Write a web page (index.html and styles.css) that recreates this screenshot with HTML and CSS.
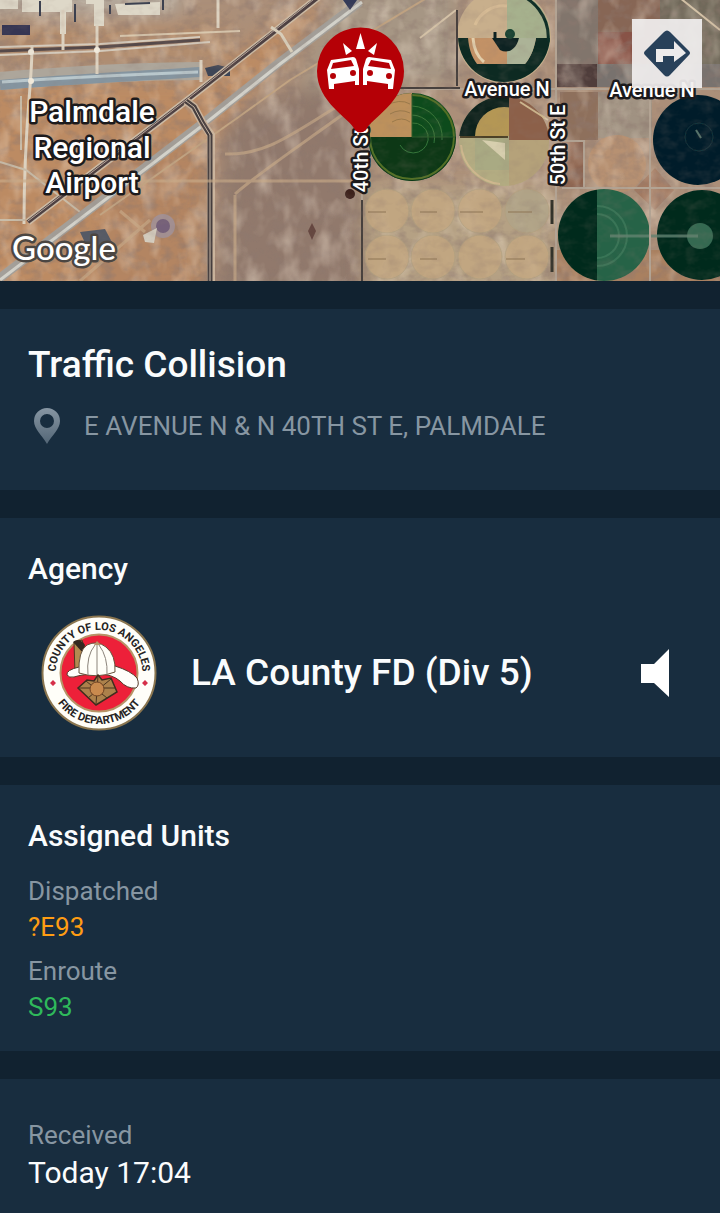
FILE: index.html
```html
<!DOCTYPE html>
<html lang="en">
<head>
<meta charset="utf-8">
<meta name="viewport" content="width=device-width, initial-scale=1">
<title>Traffic Collision</title>
<link rel="stylesheet" href="styles.css">
</head>
<body>
<main class="page">
  <section class="map" aria-label="Incident map">
    <svg class="map-canvas" viewBox="0 0 720 281" role="img" aria-label="Satellite map of Palmdale">
      <defs>
        <filter id="grain" x="0" y="0" width="100%" height="100%">
          <feTurbulence type="fractalNoise" baseFrequency="0.07 0.1" numOctaves="3" seed="8"/>
          <feColorMatrix values="0 0 0 0 0.27  0 0 0 0 0.19  0 0 0 0 0.16  2.2 0 0 0 -0.95"/>
        </filter>
        <filter id="light" x="0" y="0" width="100%" height="100%">
          <feTurbulence type="fractalNoise" baseFrequency="0.05 0.03" numOctaves="3" seed="21"/>
          <feColorMatrix values="0 0 0 0 0.9  0 0 0 0 0.78  0 0 0 0 0.64  0 2.2 0 0 -1"/>
        </filter>
        <filter id="soft" x="-10%" y="-10%" width="120%" height="120%"><feGaussianBlur stdDeviation="9"/></filter>
        <filter id="edge" x="-5%" y="-5%" width="110%" height="110%"><feGaussianBlur stdDeviation="0.6"/></filter>
        <clipPath id="fieldA"><circle cx="504" cy="36" r="46"/></clipPath>
        <clipPath id="fieldB"><circle cx="412" cy="137" r="44"/></clipPath>
        <clipPath id="fieldC"><circle cx="504" cy="141" r="45"/></clipPath>
        <clipPath id="fieldD"><circle cx="604" cy="235" r="46"/></clipPath>
      </defs>
      <rect width="720" height="281" fill="#ab8f79"/>
      <g filter="url(#soft)">
        <path d="M-20 80H200L280 20 330 0 210 140 200 300H-20Z" fill="#bc8b63"/>
        <path d="M0 24H230V60H0Z" fill="#b38c6c"/>
        <path d="M-20-20H180V14H-20Z" fill="#b4a99c"/>
        <path d="M225 120 320 80H362V300H215Z" fill="#91796c"/>
        <path d="M340-20H458V85H400L300 90Z" fill="#a69684"/>
        <path d="M120 150H205V290H90Z" fill="#b38562"/>
        <path d="M365 185H555V290H365Z" fill="#b5a184"/>
      </g>
      <g filter="url(#edge)">
        <path d="M555 0H598V64H555Z" fill="#81746c"/>
        <path d="M598 0H660V64H598Z" fill="#876655"/>
        <path d="M598 32H634V64H598Z" fill="#885347"/>
        <path d="M660 0H720V64H660Z" fill="#6f695a"/>
        <path d="M557 64H597V87H557Z" fill="#4f3d3a"/>
        <path d="M597 64H720V87H597Z" fill="#78726e"/>
        <path d="M560 92H598V140H560Z" fill="#8e705b"/>
        <path d="M598 92H652V138H598Z" fill="#a09282"/>
        <path d="M562 141H584V189H562Z" fill="#8c624d"/>
        <circle cx="617" cy="164" r="29" fill="#b79172"/>
        <path d="M634 190 655 168 674 190 655 210Z" fill="#a27a62"/>
        <path d="M557 250H720V281H557Z" fill="#a98061"/>
      </g>
      <rect width="720" height="281" filter="url(#grain)" opacity=".5"/>
      <rect width="720" height="281" filter="url(#light)" opacity=".45"/>
      <g filter="url(#edge)">
        <g fill="#ded8c8">
          <path d="M22 0H72V12H22ZM86 0H104V26H94V4H86ZM115 4 160 2V15H118ZM60 10H66V34H60Z"/>
          <path d="M0 0H18V9H0Z"/>
        </g>
        <path d="M40 1V16M75 4V22M110 5V14M125 4 150 3M163 0V10" stroke="#3a4050" stroke-width="2"/>
        <path d="M2 25H30V35H2Z" fill="#363453"/>
        <path d="M205 68 218 65 230 68V76H208Z" fill="#3d4556"/>
        <path d="M0 81C70 75 150 71 201 71" fill="none" stroke="#ada69b" stroke-width="18"/>
        <path d="M0 85C70 79 140 76 200 72" fill="none" stroke="#8595a0" stroke-width="10"/>
        <path d="M2 82C70 77 120 75 198 72" fill="none" stroke="#b9c8cd" stroke-width="3"/>
        <path d="M0 47 100 44 200 37M0 55 100 51 210 42" fill="none" stroke="#d5cbbc" stroke-width="2"/>
        <path d="M0 51 100 47 200 40" fill="none" stroke="#54494a" stroke-width="3"/>
        <path d="M120 36 240 31" stroke="#d9c8ae" stroke-width="2"/>
        <path d="M32 45C32 90 24 120 24 224M97 25V74M63 10V50M201 60V82M218 0V28" fill="none" stroke="#ddd2c0" stroke-width="3"/>
        <circle cx="31" cy="52" r="3" fill="#f1eadb"/><circle cx="31" cy="81" r="3" fill="#f1eadb"/><circle cx="97" cy="50" r="3" fill="#f1eadb"/>
        <path d="M21 96V150M0 162 26 170 80 212M0 220H25" fill="none" stroke="#c9bda9" stroke-width="2"/>
        <path d="M100 215 240 116 290 80 430-4" fill="none" stroke="#c2a482" stroke-width="2"/>
        <path d="M0 278 207 120 280 62 360 2" fill="none" stroke="#a39f99" stroke-width="9"/>
        <path d="M0 280 207 122 280 64 362 2" fill="none" stroke="#d3d2ca" stroke-width="3"/>
        <path d="M343 0 350 10 357 0" fill="#343a58"/>
        <path d="M28 222 190 98 320-4" fill="none" stroke="#cdbca6" stroke-width="7"/>
        <path d="M28 222 190 98 320-4" fill="none" stroke="#4e4142" stroke-width="4"/>
        <path d="M28 221 190 97 318-4" fill="none" stroke="#b8a79b" stroke-width="1"/>
        <path d="M271 27 281 34 292 52" fill="none" stroke="#d8cdb9" stroke-width="3"/>
        <path d="M186 101 194 107 202 122 211 135V281" fill="none" stroke="#cbb59d" stroke-width="8"/>
        <path d="M186 101 194 107 202 122 210 135V281" fill="none" stroke="#443c3d" stroke-width="5"/>
        <path d="M186 101 194 107 202 122 210 135V281" fill="none" stroke="#c9b9a8" stroke-width="1"/>
        <path d="M225 154C270 156 300 127 355 96M235 194C255 176 285 156 342 115M235 195V281M0 181H362M80 281 150 220M120 211 145 232" fill="none" stroke="#c7aa88" stroke-width="3" opacity=".65"/>
        <circle cx="163" cy="226" r="12" fill="#a39092"/><circle cx="163" cy="226" r="7" fill="#75617a"/>
        <path d="M143 235 157 228 154 243 145 242Z" fill="#d5cec0"/>
        <path d="M80 232 105 229 116 250 87 247Z" fill="#555a65"/>
        <circle cx="350" cy="194" r="5" fill="#3c211e"/><path d="M312 223 316 231 312 240 308 231Z" fill="#654740"/>
        <path d="M420 38 456 10M515 100 548 120M680-2 720 30" stroke="#d4c2a7" stroke-width="2"/>

        <circle cx="504" cy="36" r="47" fill="#c8af8c"/>
        <g clip-path="url(#fieldA)">
          <path d="M507-12H555V64H507Z" fill="#a6b18d"/>
          <path d="M458 38H552V84H458Z" fill="#082a24"/>
          <path d="M468 38H536C534 50 530 58 525 64H477C471 56 469 48 468 38Z" fill="#c39266"/>
          <path d="M507 38H536C534 50 530 58 525 64H507Z" fill="#acb397"/>
          <path d="M473 38Q474 54 484 62" fill="none" stroke="#e4d0ac" stroke-width="3"/>
          <path d="M475 25A31 31 0 0 1 507 6" fill="none" stroke="#d8bd96" stroke-width="3"/>
        </g>
        <path d="M510-8A46 46 0 0 1 548 42" fill="none" stroke="#112e25" stroke-width="3"/>
        <path d="M492 38H519C516 50 508 54 500 50Z" fill="#102223"/><circle cx="510" cy="34" r="5" fill="#164331"/><path d="M495 32V40" stroke="#102223" stroke-width="3"/>

        <g clip-path="url(#fieldB)">
          <path d="M368 90H460V184H368Z" fill="#104c1b"/>
          <path d="M370 137H460V184H370Z" fill="#083819"/>
          <path d="M370 92H412V137H370Z" fill="#bd915c"/>
          <path d="M390 114Q400 108 410 113M385 106Q400 98 410 104M392 122Q402 116 410 122" stroke="#9a794b" fill="none"/>
        </g>
        <path d="M412 95A42 42 0 1 1 370 137" fill="none" stroke="#526f25" stroke-width="2"/>
        <path d="M412 123A15 15 0 1 1 400 145M412 115A23 23 0 0 1 434 143M412 106A31 31 0 0 1 442 140" fill="none" stroke="#39763a" stroke-width="1"/>
        <path d="M412 94V137H455" fill="none" stroke="#2e5b29" stroke-width="1"/>

        <circle cx="504" cy="141" r="45" fill="#b3ac82"/>
        <g clip-path="url(#fieldC)">
          <path d="M458 90H510V136H458Z" fill="#0b211d"/>
          <circle cx="504" cy="136" r="29" fill="#b49755"/>
          <path d="M475 136H509V170H475Z" fill="#a9aa83"/>
          <path d="M509 90H550V140H509Z" fill="#8c614a"/>
          <path d="M509 140H552V190H509Z" fill="#b5a27a"/>
          <path d="M482 140 505 143V160Z" fill="#d7cfae"/>
        </g>
        <path d="M460 137H508" stroke="#4b4128" stroke-width="2"/>
        <path d="M461 145A43 43 0 0 0 500 184M520 102 545 118" fill="none" stroke="#ceb78e" stroke-width="2"/>

        <circle cx="698" cy="140" r="45" fill="#061d29"/><circle cx="699" cy="137" r="14" fill="none" stroke="#10343b"/><path d="M696 130 701 138" stroke="#55736b" stroke-width="2"/>
        <g clip-path="url(#fieldD)">
          <path d="M555 185H597V281H555Z" fill="#062c1c"/>
          <path d="M597 185H652V281H597Z" fill="#286347"/>
          <path d="M597 206A30 30 0 0 1 597 266M597 214A22 22 0 0 1 597 258" stroke="#397457" stroke-width="2" fill="none"/>
        </g>
        <circle cx="702" cy="235" r="45" fill="#04291f"/><circle cx="700" cy="236" r="13" fill="#366951"/>
        <path d="M610 236H652M652 236H698" stroke="#618471" stroke-width="3" opacity=".8"/>

        <g fill="#c4a781" stroke="#b2a07f" opacity=".75">
          <circle cx="387" cy="211" r="22"/><circle cx="433" cy="211" r="22"/><circle cx="480" cy="211" r="22"/><circle cx="527" cy="211" r="22" fill="#afa489"/>
          <circle cx="387" cy="257" r="22"/><circle cx="433" cy="257" r="22"/><circle cx="480" cy="257" r="22"/><circle cx="527" cy="257" r="22"/>
        </g>
        <path d="M368 212H386M420 212H437M460 212H483M508 212H532M368 259H386M420 259H437M506 259H525" stroke="#8d7655" stroke-width="1"/>
        <path d="M552 200V224M552 247V272" stroke="#33332b" stroke-width="3"/>
        <path d="M457 10V86M404 89H720M362 140V281M556 0V281M650 90V281M562 188H720M557 141H584V188" fill="none" stroke="#b3a494" stroke-width="2"/>
        <path d="M400 88H460M457 10V86M362 200V281" fill="none" stroke="#46403c" stroke-width="2"/>
      </g>
      <rect width="720" height="281" filter="url(#grain)" opacity=".18"/>

      <g class="label place">
        <text x="92" y="122">Palmdale</text>
        <text x="92" y="158">Regional</text>
        <text x="92" y="193">Airport</text>
      </g>
      <g class="label road">
        <text x="507" y="96">Avenue N</text>
        <text x="652" y="97">Avenue N</text>
        <text transform="translate(565 145) rotate(-90)">50th St E</text>
        <text transform="translate(368 152) rotate(-90)">40th St E</text>
      </g>
      <text class="label brand" x="12" y="260">Google</text>

      <path d="M355 130C350 118 317 103 317 71A43.500 43.500 0 0 1 404 71C404 103 371 118 366 130Q360 135 355 130Z" fill="#b50006"/>
      <g fill="#fff">
        <path d="M360.500 33 365 49H356ZM343 43 352 51 346 55ZM377 43 374 55 368 51Z"/>
        <path fill-rule="evenodd" d="M331 60 353 57Q355 57 356 59L359 69V85H355V81L334 84V89H329L327 70ZM333 63 331 69 354 66 351 60ZM333 73A3 3 0 1 0 333 79 3 3 0 1 0 333 73ZM353 70A3 3 0 1 0 353 76 3 3 0 1 0 353 70Z"/>
        <path fill-rule="evenodd" d="M391 60 369 57Q367 57 366 59L363 69V85H367V81L388 84V89H393L395 70ZM389 63 391 69 368 66 371 60ZM389 73A3 3 0 1 0 389 79 3 3 0 1 0 389 73ZM370 70A3 3 0 1 0 370 76 3 3 0 1 0 370 70Z"/>
      </g>
    </svg>
    <button class="directions" type="button" aria-label="Directions">
      <svg viewBox="0 0 70 70" aria-hidden="true">
        <path d="M32 13Q35 10 38 13L57 32Q59 34 57 36L38 56Q35 59 32 56L13 36Q11 34 13 32Z" fill="#28415a"/>
        <path d="M24 43V30H42V22L54 34 42 43V37H31V43Z" fill="#edebeb"/>
      </svg>
    </button>
  </section>

  <section class="card incident">
    <h1 class="title">Traffic Collision</h1>
    <p class="address">
      <svg class="pin" viewBox="0 0 26 36" aria-hidden="true">
        <defs><linearGradient id="pinFill" x2="0" y2="1"><stop stop-color="#8796a3"/><stop offset="1" stop-color="#536676"/></linearGradient></defs>
        <path fill="url(#pinFill)" fill-rule="evenodd" d="M13 0A13 13 0 0 1 26 13C26 21 18 27 13 36 8 27 0 21 0 13A13 13 0 0 1 13 0ZM13 6A7 7 0 1 0 13 20 7 7 0 1 0 13 6Z"/>
      </svg>
      <span>E AVENUE N &amp; N 40TH ST E, PALMDALE</span>
    </p>
  </section>

  <section class="card agency">
    <h2 class="heading">Agency</h2>
    <div class="agency-row">
      <svg class="seal" viewBox="0 0 116 116" role="img" aria-label="County of Los Angeles Fire Department">
        <defs>
          <path id="arcTop" d="M24 85.600A43.500 43.500 0 1 1 92 85.600"/>
          <path id="arcBottom" d="M7 58A51 51 0 0 0 109 58"/>
        </defs>
        <circle cx="58" cy="58" r="56.500" fill="#fffef9" stroke="#8b7650" stroke-width="2"/>
        <circle cx="58" cy="58" r="38.500" fill="#ed2039" stroke="#b79467" stroke-width="2"/>
        <text class="seal-text"><textPath href="#arcTop" startOffset="50%">COUNTY OF LOS ANGELES</textPath></text>
        <text class="seal-text"><textPath href="#arcBottom" startOffset="50%">FIRE DEPARTMENT</textPath></text>
        <path d="M12 65 15 68 12 71 9 68ZM104 65 107 68 104 71 101 68Z" fill="#d52f49"/>
        <path d="M33 27 41 25 44 35 40 59H34Z" fill="#b38a50" stroke="#4f3820"/>
        <path d="M32 27Q38 22 44 30L42 38Z" fill="#342820"/>
        <path d="M26 60Q25 55 38 52L74 51Q90 56 96 63 99 70 95 73 86 74 79 66 71 59 57 59 42 59 33 62 28 63 26 60Z" fill="#fffef9" stroke="#573c2b"/>
        <path d="M38 58Q37 36 46 30 56 25 65 32 75 40 74 57 56 64 38 58Z" fill="#fffef7" stroke="#66513b"/>
        <path d="M47 60Q45 41 54 30M56 60V30M66 60Q67 42 58 30" fill="none" stroke="#8b847b" stroke-width="1"/>
        <path d="M53 30 56 26 60 30Z" fill="#b79467"/>
        <path d="M57 60 61 65 70 63 76 77 55 90 37 73 46 65 53 66Z" fill="#ac814b" stroke="#3f2d1d" stroke-width="1.500"/>
        <path d="M45 66 66 83M70 64 47 83M38 73H75M57 61 55 89" stroke="#49331f" stroke-width="1"/>
        <circle cx="56" cy="74" r="7" fill="#c98a4e" stroke="#714323"/>
      </svg>
      <span class="agency-name">LA County FD (Div 5)</span>
      <button class="speaker" type="button" aria-label="Play radio">
        <svg viewBox="0 0 28 48" aria-hidden="true"><path d="M0 15H13L28 0V48L13 34H0Z" fill="#fff"/></svg>
      </button>
    </div>
  </section>

  <section class="card units">
    <h2 class="heading">Assigned Units</h2>
    <dl class="unit-list">
      <div><dt>Dispatched</dt><dd class="dispatched">?E93</dd></div>
      <div><dt>Enroute</dt><dd class="enroute">S93</dd></div>
    </dl>
  </section>

  <section class="card received">
    <dl>
      <dt>Received</dt>
      <dd class="time">Today 17:04</dd>
    </dl>
  </section>
</main>
</body>
</html>
```

FILE: styles.css
```css
* { box-sizing: border-box; }

body {
  margin: 0;
  background: #182d3f;
  color: #fafcfd;
  font-family: Roboto, "Liberation Sans", sans-serif;
}

h1, h2, p, dl, dd { margin: 0; }
h1, h2 { font-weight: 500; }

button {
  padding: 0;
  border: 0;
  background: none;
  cursor: pointer;
}

svg { display: block; }

.page {
  display: flex;
  flex-direction: column;
  gap: 28px;
  background: #112230;
}

.map { position: relative; }
.map-canvas { width: 100%; height: auto; }

.label {
  fill: #fff;
  stroke: #1c1a1c;
  stroke-width: 5px;
  stroke-linejoin: round;
  paint-order: stroke;
  font-weight: 500;
  text-anchor: middle;
}
.place { font-size: 30px; }
.road { font-size: 20px; }
.brand {
  font-family: Lato, sans-serif;
  font-size: 33px;
  stroke: #4b4642;
  text-anchor: start;
}

.directions {
  position: absolute;
  top: 19px;
  right: 18px;
  width: 70px;
  height: 69px;
  background: rgba(240, 238, 238, 0.93);
}

.card {
  padding: 32px 28px 26px;
  background: #182d3f;
}

.incident { padding-bottom: 46px; }
.title { font-size: 37px; line-height: 48px; }

.address {
  display: flex;
  align-items: center;
  gap: 24px;
  margin-top: 19px;
  padding-left: 6px;
  color: #8796a2;
  font-size: 26px;
  line-height: 36px;
}
.pin { width: 26px; height: 36px; flex: none; }

.heading { font-size: 30px; line-height: 38px; }

.agency-row {
  display: flex;
  align-items: center;
  margin-top: 27px;
  padding: 0 23px 0 13px;
}
.seal { width: 116px; height: 116px; flex: none; }
.seal-text {
  font: 700 11px Roboto, "Liberation Sans", sans-serif;
  fill: #252323;
  text-anchor: middle;
}
.agency-name {
  flex: 1;
  margin-left: 34px;
  font-size: 37px;
  font-weight: 500;
  line-height: 48px;
}
.speaker { width: 28px; height: 48px; }

.unit-list {
  display: flex;
  flex-direction: column;
  gap: 8px;
  margin-top: 18px;
}
dt, dd { font-size: 26px; line-height: 36px; }
dt { color: #8796a2; }
.dispatched { color: #ff9d13; }
.enroute { color: #2fb95b; }

.received { padding-top: 38px; }
.time { font-size: 30px; line-height: 40px; }
```
